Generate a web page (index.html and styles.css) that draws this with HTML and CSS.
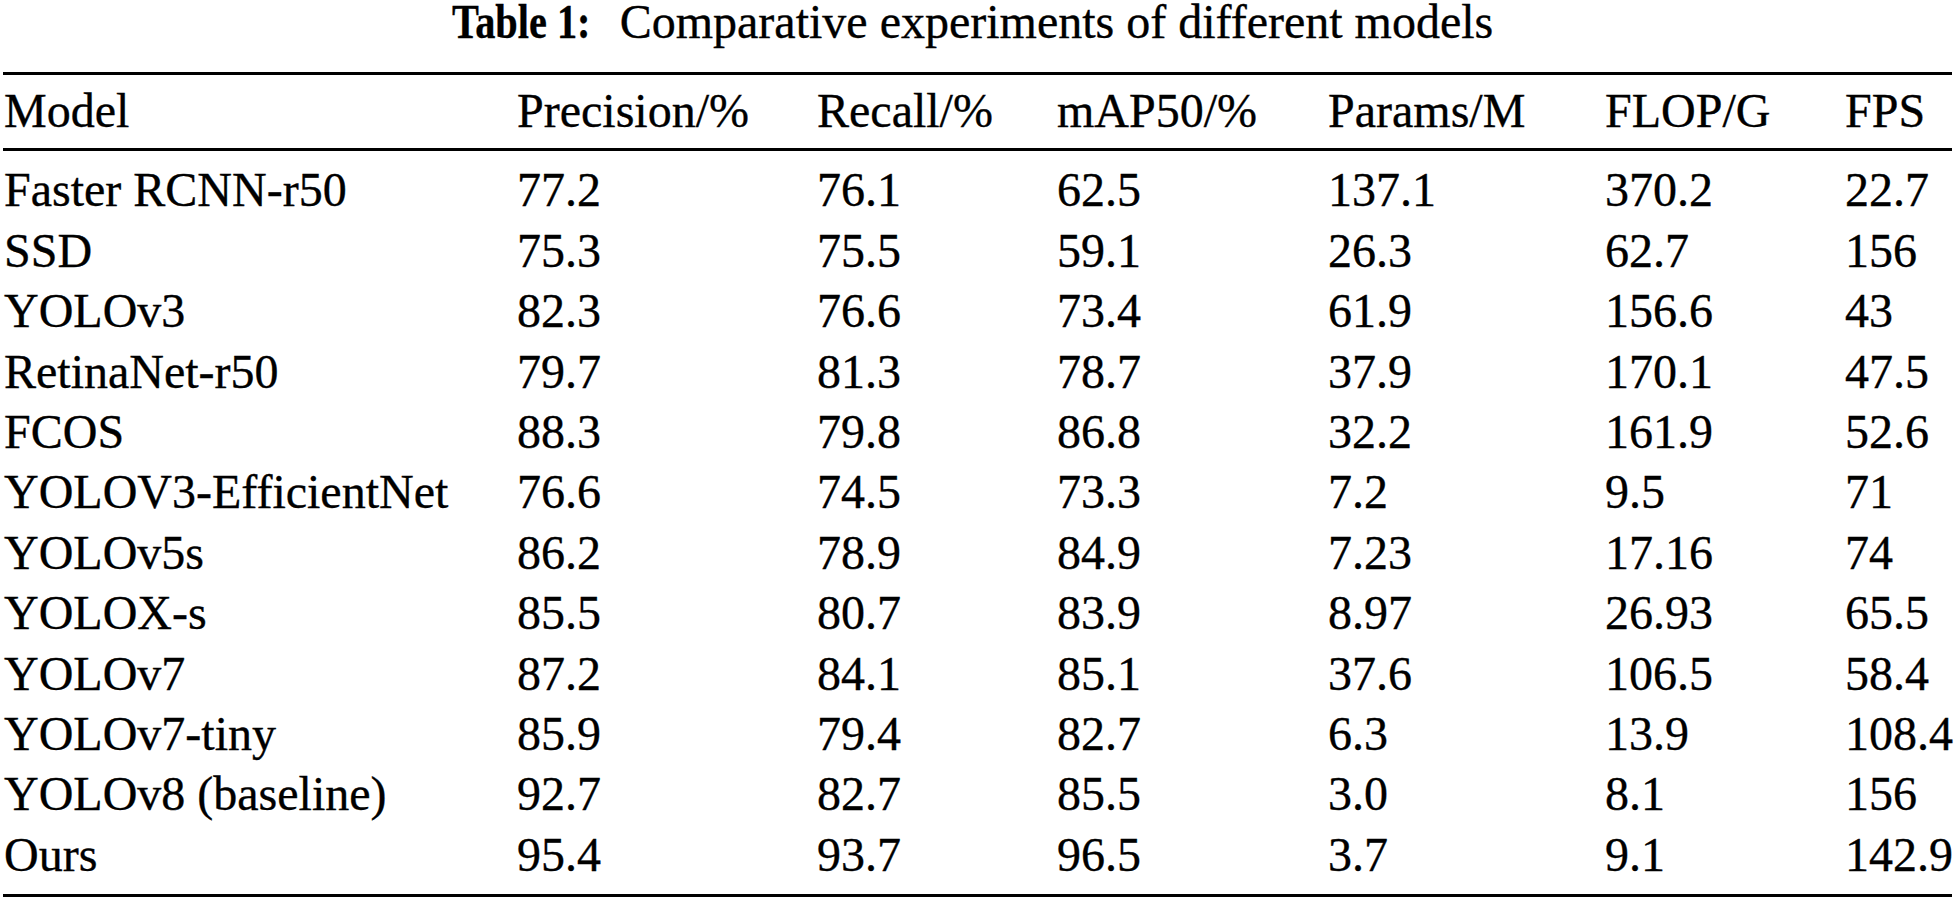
FILE: index.html
```html
<!DOCTYPE html>
<html lang="en">
<head>
<meta charset="utf-8">
<title>Table 1: Comparative experiments of different models</title>
<link rel="stylesheet" href="styles.css">
</head>
<body>
<div class="page">
  <div class="caption"><span class="cap-label">Table 1:</span><span class="cap-text">Comparative experiments of different models</span></div>
  <table class="results">
    <colgroup>
      <col class="c-model">
      <col class="c-prec">
      <col class="c-rec">
      <col class="c-map">
      <col class="c-params">
      <col class="c-flop">
      <col class="c-fps">
    </colgroup>
    <thead>
      <tr><th>Model</th><th>Precision/%</th><th>Recall/%</th><th>mAP50/%</th><th>Params/M</th><th>FLOP/G</th><th>FPS</th></tr>
    </thead>
    <tbody>
      <tr><td>Faster RCNN-r50</td><td>77.2</td><td>76.1</td><td>62.5</td><td>137.1</td><td>370.2</td><td>22.7</td></tr>
      <tr><td>SSD</td><td>75.3</td><td>75.5</td><td>59.1</td><td>26.3</td><td>62.7</td><td>156</td></tr>
      <tr><td>YOLOv3</td><td>82.3</td><td>76.6</td><td>73.4</td><td>61.9</td><td>156.6</td><td>43</td></tr>
      <tr><td>RetinaNet-r50</td><td>79.7</td><td>81.3</td><td>78.7</td><td>37.9</td><td>170.1</td><td>47.5</td></tr>
      <tr><td>FCOS</td><td>88.3</td><td>79.8</td><td>86.8</td><td>32.2</td><td>161.9</td><td>52.6</td></tr>
      <tr><td>YOLOV3-EfficientNet</td><td>76.6</td><td>74.5</td><td>73.3</td><td>7.2</td><td>9.5</td><td>71</td></tr>
      <tr><td>YOLOv5s</td><td>86.2</td><td>78.9</td><td>84.9</td><td>7.23</td><td>17.16</td><td>74</td></tr>
      <tr><td>YOLOX-s</td><td>85.5</td><td>80.7</td><td>83.9</td><td>8.97</td><td>26.93</td><td>65.5</td></tr>
      <tr><td>YOLOv7</td><td>87.2</td><td>84.1</td><td>85.1</td><td>37.6</td><td>106.5</td><td>58.4</td></tr>
      <tr><td>YOLOv7-tiny</td><td>85.9</td><td>79.4</td><td>82.7</td><td>6.3</td><td>13.9</td><td>108.4</td></tr>
      <tr><td>YOLOv8 (baseline)</td><td>92.7</td><td>82.7</td><td>85.5</td><td>3.0</td><td>8.1</td><td>156</td></tr>
      <tr><td>Ours</td><td>95.4</td><td>93.7</td><td>96.5</td><td>3.7</td><td>9.1</td><td>142.9</td></tr>
    </tbody>
  </table>
</div>
</body>
</html>
```
FILE: styles.css
```css
html, body {
  margin: 0;
  padding: 0;
  background: #ffffff;
}

body {
  font-family: "Liberation Serif", "Times New Roman", serif;
  color: #000000;
  font-size: 48px;
  -webkit-text-stroke: 0.35px #000000;
}

.page {
  width: 1954px;
  height: 900px;
  overflow: hidden;
}

.caption {
  height: 44px;
  line-height: 44px;
  margin-bottom: 28px;
  text-align: center;
  padding-right: 9px;
  white-space: nowrap;
}

.cap-label {
  display: inline-block;
  font-weight: bold;
  transform: scaleX(0.84);
  transform-origin: left center;
  margin-right: -27px;
}

.cap-text {
  margin-left: 30px;
}

.results {
  margin-left: 3px;
  width: 1949px;
  table-layout: fixed;
  border-collapse: separate;
  border-spacing: 0;
}

.c-model { width: 514px; }
.c-prec { width: 300px; }
.c-rec { width: 240px; }
.c-map { width: 271px; }
.c-params { width: 277px; }
.c-flop { width: 240px; }
.c-fps { width: 107px; }

.results th,
.results td {
  padding: 0;
  text-align: left;
  font-weight: normal;
  line-height: 60.4px;
  white-space: nowrap;
  overflow: visible;
  vertical-align: top;
}

.results th:first-child,
.results td:first-child {
  padding-left: 1px;
}

.results th {
  border-top: 3px solid #000;
  border-bottom: 3px solid #000;
  padding-top: 6px;
  padding-bottom: 7px;
}

.results tbody tr:first-child td {
  padding-top: 9px;
}

.results tbody tr:last-child td {
  padding-bottom: 9px;
  border-bottom: 3px solid #000;
}
```
